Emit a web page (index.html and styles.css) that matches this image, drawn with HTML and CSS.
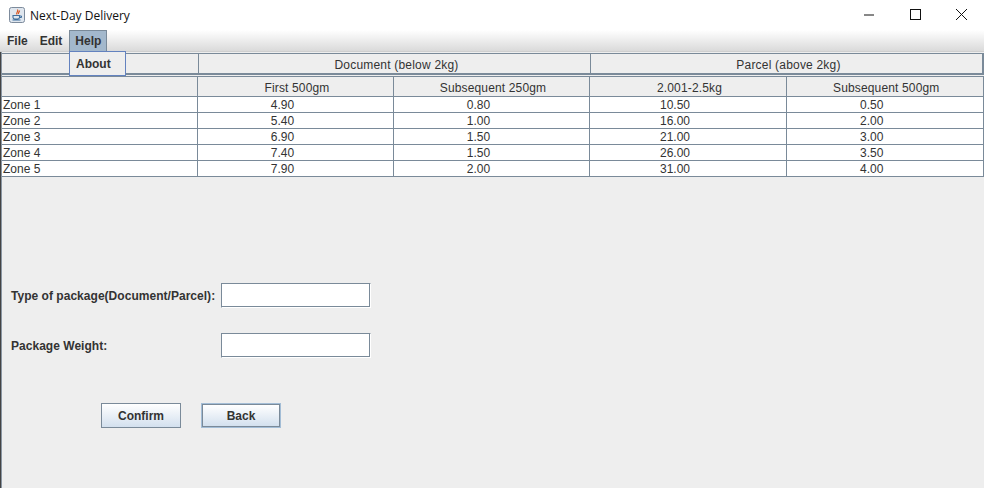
FILE: index.html
```html
<!DOCTYPE html>
<html lang="en">
<head>
    <meta charset="UTF-8">
    <meta name="viewport" content="width=device-width, initial-scale=1.0">
    <title>Next-Day Delivery</title>
    <link rel="stylesheet" href="styles.css">
</head>
<body>
    <div class="titlebar">
        <svg class="app-icon" width="16" height="16" viewBox="0 0 16 16">
            <rect x="0.5" y="0.5" width="15" height="15" rx="2" fill="#dfe6ee" stroke="#7d8b9c"/>
            <path d="M8.500 2.500C10 4.500 6.500 5.500 8 7.500M10.500 3.500C10.500 5 9 5.500 9.500 7" fill="none" stroke="#d9541e" stroke-width="1.200"/>
            <path d="M4 8.500H10.500V10.500C10.500 11.500 9.500 12 8.500 12H6C5 12 4 11.500 4 10.500ZM3.500 13H11.500" fill="none" stroke="#3f6f9e" stroke-width="1.100"/>
            <path d="M10.500 9H12.500V10.500H10.500" fill="none" stroke="#3f6f9e"/>
        </svg>
        <span class="app-title">Next-Day Delivery</span>
        <div class="win-controls">
            <svg width="46" height="30" viewBox="0 0 46 30"><path d="M18 15H28" stroke="#111"/></svg>
            <svg width="46" height="30" viewBox="0 0 46 30"><rect x="18.500" y="9.500" width="10" height="10" fill="none" stroke="#111"/></svg>
            <svg width="46" height="30" viewBox="0 0 46 30"><path d="M18 9L29 20M29 9L18 20" stroke="#111"/></svg>
        </div>
    </div>

    <div class="menubar">
        <span class="menu">File</span>
        <span class="menu">Edit</span>
        <span class="menu menu-open">Help</span>
        <div class="dropdown">About</div>
    </div>

    <div class="content">
        <div class="group-header">
            <div class="group g1"></div>
            <div class="group g2">Document (below 2kg)</div>
            <div class="group g3">Parcel (above 2kg)</div>
        </div>

        <table class="rates">
            <colgroup>
                <col class="c1"><col class="c2"><col class="c3"><col class="c4"><col class="c5">
            </colgroup>
            <thead>
                <tr><th></th><th>First 500gm</th><th>Subsequent 250gm</th><th>2.001-2.5kg</th><th>Subsequent 500gm</th></tr>
            </thead>
            <tbody>
                <tr><td>Zone 1</td><td>4.90</td><td>0.80</td><td>10.50</td><td>0.50</td></tr>
                <tr><td>Zone 2</td><td>5.40</td><td>1.00</td><td>16.00</td><td>2.00</td></tr>
                <tr><td>Zone 3</td><td>6.90</td><td>1.50</td><td>21.00</td><td>3.00</td></tr>
                <tr><td>Zone 4</td><td>7.40</td><td>1.50</td><td>26.00</td><td>3.50</td></tr>
                <tr><td>Zone 5</td><td>7.90</td><td>2.00</td><td>31.00</td><td>4.00</td></tr>
            </tbody>
        </table>

        <div class="form">
            <div class="form-row">
                <label for="type">Type of package(Document/Parcel):</label>
                <input type="text" id="type">
            </div>
            <div class="form-row">
                <label for="weight">Package Weight:</label>
                <input type="text" id="weight">
            </div>
            <div class="buttons">
                <button>Confirm</button>
                <button class="focused">Back</button>
            </div>
        </div>
    </div>
</body>
</html>
```

FILE: styles.css
```css
html, body {
    margin: 0;
    padding: 0;
    height: 100%;
    overflow: hidden;
}
body {
    font-family: "Liberation Sans", Arial, sans-serif;
    font-size: 12px;
    background-color: #eeeeee;
    color: #333;
    display: flex;
    flex-direction: column;
}
.titlebar {
    height: 30px;
    flex: none;
    background-color: #fff;
    display: flex;
    align-items: center;
    padding-left: 9px;
}
.app-title {
    margin-left: 5px;
    font-family: "Open Sans", sans-serif;
    font-size: 12px;
    color: #111;
}
.win-controls {
    margin-left: auto;
    display: flex;
}
.win-controls svg {
    display: block;
}
.menubar {
    position: relative;
    height: 22px;
    flex: none;
    display: flex;
    box-sizing: border-box;
    padding: 0 0 1px 2px;
    background: linear-gradient(#ffffff, #dadada);
    border-bottom: 1px solid #cfcfcf;
}
.menu {
    padding: 0 5px;
    margin-right: 2px;
    line-height: 22px;
    font-weight: bold;
    color: #333;
}
.menu-open {
    margin: 0;
    height: 21px;
    width: 38px;
    box-sizing: border-box;
    background-color: #a3b8cc;
    border: 1px solid #7a8a99;
    border-bottom: 0;
    line-height: 21px;
}
.dropdown {
    position: absolute;
    left: 69px;
    top: 21px;
    width: 57px;
    height: 25px;
    box-sizing: border-box;
    padding-left: 6px;
    line-height: 25px;
    font-weight: bold;
    background-color: #eeeeee;
    border: 1px solid #6382bf;
    z-index: 2;
}
.content {
    flex: 1;
    padding-left: 1px;
    border-left: 1px solid #444;
    box-shadow: inset 1px 0 0 #8a96a3;
}
.group-header {
    display: flex;
    height: 22px;
    margin-top: 1px;
    box-sizing: border-box;
    border-top: 1px solid #7a8a99;
    border-bottom: 2px solid #7a8a99;
    border-right: 2px solid #7a8a99;
}
.group {
    box-sizing: border-box;
    text-align: center;
    line-height: 23px;
    letter-spacing: 0.2px;
    border-right: 1px solid #7a8a99;
    background-color: #eeeeee;
}
.g1 {
    width: 197px;
}
.g2 {
    width: 392px;
    padding-left: 4px;
}
.g3 {
    flex: 1;
    padding-left: 4px;
    border-right: 0;
}
.rates {
    width: 982px;
    margin-top: 1px;
    border-collapse: collapse;
    table-layout: fixed;
}
.c1 {
    width: 195.500px;
}
.c2, .c3 {
    width: 196px;
}
.c4, .c5 {
    width: 197px;
}
.rates th, .rates td {
    box-sizing: border-box;
    font-weight: normal;
    text-align: center;
    overflow: hidden;
    white-space: nowrap;
    border: 1px solid #7a8a99;
}
.rates tr > :first-child {
    border-left: 0;
}
.rates tr > :last-child {
    border-right-width: 2px;
}
.rates th {
    height: 20px;
    padding: 3px 0 0 3px;
    background-color: #eeeeee;
    line-height: 16px;
    letter-spacing: 0.15px;
}
.rates td {
    height: 16px;
    padding: 2px 26px 0 0;
    background-color: #fff;
    line-height: 13px;
}
.rates td:first-child {
    text-align: left;
    padding-left: 1px;
    padding-right: 0;
}
.form {
    padding: 106px 0 0 9px;
}
.form-row {
    display: flex;
    align-items: center;
    margin-bottom: 25px;
}
.form-row label {
    width: 210px;
    padding-top: 1px;
    font-weight: bold;
    letter-spacing: 0.03px;
}
.form-row input {
    width: 148px;
    height: 23px;
    padding: 0;
    background-color: #fff;
    border: 1px solid #7a8a99;
    border-right-color: #fff;
    border-bottom-color: #fff;
    outline: 0;
    box-shadow: inset 0 -1px 0 #7a8a99, inset -1px 0 0 #7a8a99;
}
.buttons {
    display: flex;
    gap: 20px;
    margin: 45px 0 0 90px;
}
.buttons button {
    width: 80px;
    height: 25px;
    padding: 0;
    font-family: "Liberation Sans", Arial, sans-serif;
    font-size: 12px;
    font-weight: bold;
    color: #333;
    background: linear-gradient(#ffffff, #d3e0ee);
    border: 1px solid #7a8a99;
}
.buttons .focused {
    width: 78px;
    height: 23px;
    margin: 1px;
    box-shadow: 0 0 0 1px #a3bdd6;
}
```
